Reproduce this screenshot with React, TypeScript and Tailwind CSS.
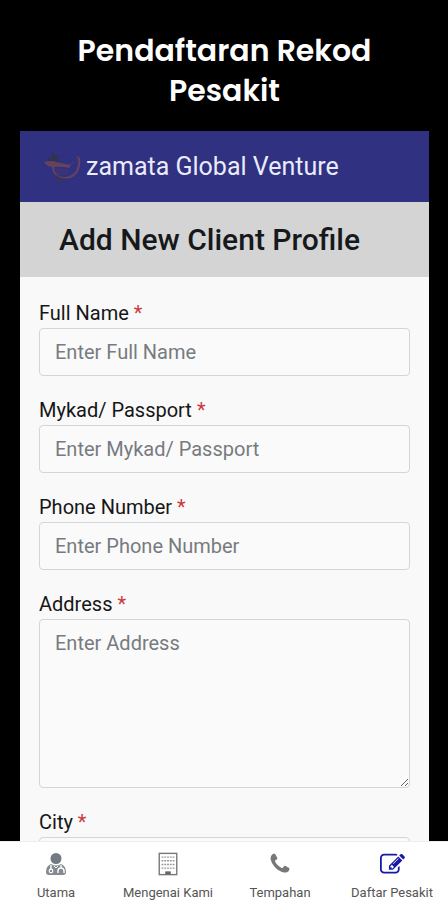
import React from 'react';

interface IconProps {
  className?: string;
}

interface Field {
  id: string;
  label: string;
  multiline?: boolean;
}

const FIELDS: Field[] = [
  { id: 'full-name', label: 'Full Name' },
  { id: 'mykad', label: 'Mykad/ Passport' },
  { id: 'phone', label: 'Phone Number' },
  { id: 'address', label: 'Address', multiline: true },
  { id: 'city', label: 'City' },
];

const BrandLogo: React.FC<IconProps> = ({ className }) => (
  <svg className={className} viewBox="0 0 40 36" fill="none" aria-hidden="true">
    <path d="M7 15L5 9L9 10L10 2L13 7L18 6L15 11L19 14L13 16Z" fill="#303451" />
    <path d="M2 13Q8 11 15 13T29 16L27 19Q18 17 11 18Q5 18 2 13Z" fill="#65435f" />
    <path d="M11 18Q12 29 23 29Q35 28 37 16Q38 11 36 8" stroke="#65435f" strokeWidth="2" />
    <path d="M12 20L26 21M13 23L27 23M16 25L25 25" stroke="#493766" strokeWidth="1" />
    <path d="M12 24Q18 31 28 29L20 31L17 35L16 30Z" fill="#3d3555" />
    <path d="M28 16L32 13M36 9L34 7" stroke="#5b3d5d" strokeWidth="1" />
  </svg>
);

const DoctorIcon: React.FC<IconProps> = ({ className }) => (
  <svg className={className} viewBox="0 0 24 24" fill="none" aria-hidden="true">
    <circle cx="12" cy="6.5" r="5.5" fill="#737a82" />
    <path d="M7 12Q2 14 2 20Q2 23 5 23H19Q22 23 22 20Q22 14 17 12Q12 15 7 12Z" fill="#858a90" />
    <path d="M7 13V18M17 13V16M14 21V19Q14 16 17 16T20 19V21" stroke="#fff" strokeWidth="1.4" />
    <circle cx="7" cy="19" r="1.8" stroke="#fff" strokeWidth="1.2" />
    <path d="M10 14L12 16L14 14" stroke="#fff" strokeWidth="1" />
  </svg>
);

const BuildingIcon: React.FC<IconProps> = ({ className }) => (
  <svg className={className} viewBox="0 0 24 26" fill="none" aria-hidden="true">
    <rect x="2.5" y="1.5" width="19" height="23" stroke="#777" strokeWidth="1.5" />
    <path d="M5 5.5H19M5 9.5H19M5 13.5H19M5 17.5H19" stroke="#999" strokeWidth="1.5" strokeDasharray="2 1" />
    <path d="M9 24V21H15V24Z" fill="#666" />
  </svg>
);

const PhoneIcon: React.FC<IconProps> = ({ className }) => (
  <svg className={className} viewBox="0 0 1792 1792" fill="currentColor" aria-hidden="true">
    <path d="M1600 1240q0 27-10 70.5t-21 68.5q-21 50-122 106-94 51-186 51-27 0-52.5-3.5t-57.5-12.5-47.5-14.5-55.5-20.5-49-18q-98-35-175-83-128-79-264.5-215.5t-215.5-264.5q-48-77-83-175-3-9-18-49t-20.5-55.5-14.5-47.5-12.5-57.5-3.5-52.5q0-92 51-186 56-101 106-122 25-11 68.5-21t70.5-10q14 0 21 3 18 6 53 76 11 19 30 54t35 63.5 31 53.5q3 4 17.5 25t21.5 35.5 7 28.5q0 20-28.5 50t-62 55-62 53-28.5 46q0 9 5 22.5t8.5 20.5 14 24 11.5 19q76 137 174 235t235 174q2 1 19 11.5t24 14 20.5 8.5 22.5 5q18 0 46-28.5t53-62 55-62 50-28.5q14 0 28.5 7t35.5 21.5 25 17.5q25 15 53.5 31t63.5 35 54 30q70 35 76 53 3 7 3 21z" />
  </svg>
);

const EditIcon: React.FC<IconProps> = ({ className }) => (
  <svg className={className} viewBox="0 0 1792 1792" fill="currentColor" aria-hidden="true">
    <path d="M888 1184l116-116-152-152-116 116v56h96v96h56zm440-720q-16-16-33 1l-350 350q-17 17-1 33t33-1l350-350q17-17 1-33zm80 594v190q0 119-84.5 203.5t-203.5 84.5h-832q-119 0-203.5-84.5t-84.5-203.5v-832q0-119 84.5-203.5t203.5-84.5h832q63 0 117 25 15 7 18 23 3 17-9 29l-49 49q-14 14-32 8-23-6-45-6h-832q-66 0-113 47t-47 113v832q0 66 47 113t113 47h832q66 0 113-47t47-113v-126q0-13 9-22l64-64q15-15 35-7t20 29zm-96-738l288 288-672 672h-288v-288zm444 132l-92 92-288-288 92-92q28-28 68-28t68 28l152 152q28 28 28 68t-28 68z" />
  </svg>
);

const NAV_ITEMS = [
  { label: 'Utama', icon: DoctorIcon },
  { label: 'Mengenai Kami', icon: BuildingIcon },
  { label: 'Tempahan', icon: PhoneIcon },
  { label: 'Daftar Pesakit', icon: EditIcon, active: true },
];

const inputClass =
  'block w-full rounded-sm border border-[#d3d5d8] bg-[#fafafa] px-[15px] text-xl text-[#212529] placeholder:text-[#777b80] focus:outline-none focus:border-blue-400';

const FormField: React.FC<{ field: Field }> = ({ field }) => (
  <div>
    <label htmlFor={field.id} className="block text-xl leading-[30px] text-[#161616]">
      {field.label} <span className="text-[#cb3940]">*</span>
    </label>
    {field.multiline ? (
      <textarea id={field.id} required placeholder={`Enter ${field.label}`} className={`${inputClass} h-[169px] py-2 leading-[30px]`} />
    ) : (
      <input id={field.id} type="text" required placeholder={`Enter ${field.label}`} className={`${inputClass} h-12`} />
    )}
  </div>
);

export default function App() {
  return (
    <div className="flex h-screen flex-col overflow-hidden bg-black font-['Roboto',sans-serif]">
      <main className="min-h-0 flex-1 overflow-y-auto pr-[19px] pl-5 [scrollbar-width:none]">
        <h1 className="mx-auto max-w-80 pt-[31px] pb-5 text-center font-['Poppins','Inter',sans-serif] text-[30px] leading-10 font-semibold text-white">
          Pendaftaran Rekod Pesakit
        </h1>

        <section className="bg-[#f9f9f9]">
          <header className="flex h-[71px] items-center bg-[#303180] px-[22px]">
            <BrandLogo className="h-9 w-10" />
            <span className="ml-1 text-[25px] leading-8 text-[#e9ebfa]">zamata Global Venture</span>
          </header>
          <div className="flex h-[75px] items-center bg-[#d4d4d4] px-[39px]">
            <h2 className="text-[30px] leading-9 font-medium text-[#16191c]">Add New Client Profile</h2>
          </div>
          <form className="flex flex-col gap-[19px] px-[19px] pt-[21px] pb-5">
            {FIELDS.map((field) => <FormField key={field.id} field={field} />)}
          </form>
        </section>
      </main>

      <nav className="grid h-[59px] shrink-0 grid-cols-4 border-t border-[#eee] bg-white">
        {NAV_ITEMS.map(({ label, icon: NavIcon, active }) => (
          <a
            key={label}
            href="#"
            aria-current={active ? 'page' : undefined}
            className="flex flex-col items-center gap-2 pt-2 whitespace-nowrap"
          >
            <span className="flex h-7 items-center">
              <NavIcon className={active ? 'h-[25px] w-[25px] text-[#1719a5]' : 'h-6 w-6 text-[#777]'} />
            </span>
            <span className="text-[13px] leading-[14px] text-[#555]">{label}</span>
          </a>
        ))}
      </nav>
    </div>
  );
}
